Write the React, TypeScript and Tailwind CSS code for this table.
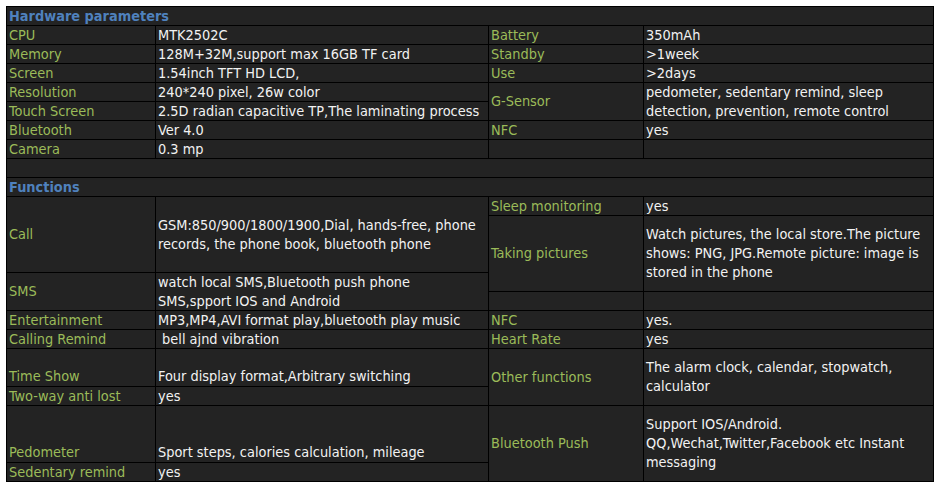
import React from "react";

type CellProps = {
  c: string;
  children?: React.ReactNode;
  kind?: "label" | "value" | "head" | "blank";
  v?: "center" | "end";
};

const Cell = ({ c, children, kind = "value", v = "center" }: CellProps) => {
  const color =
    kind === "label"
      ? "text-[#9bbb59]"
      : kind === "head"
      ? "text-[#4f81bd] font-bold"
      : "text-[#f2f2f2]";
  const align = v === "end" ? "justify-end" : "justify-center";
  return (
    <div className={`${c} bg-[#232323] flex flex-col ${align} pl-[2px] overflow-hidden whitespace-nowrap leading-[19px] ${color}`}>
      {children}
    </div>
  );
};

export default function App() {
  return (
    <div className="w-[942px] h-[487px] bg-white pl-[6px] pt-[6px]" style={{ fontFamily: '"DejaVu Sans Condensed", "DejaVu Sans", sans-serif' }}>
      <div className="grid grid-cols-[148px_332px_154px_289px] grid-rows-[repeat(25,18px)] gap-px p-px bg-black w-[928px] text-[14.4px]">
        <Cell c="col-span-4 row-start-1 col-start-1" kind="head">Hardware parameters</Cell>

        <Cell c="col-start-1 row-start-2" kind="label">CPU</Cell>
        <Cell c="col-start-2 row-start-2">MTK2502C</Cell>
        <Cell c="col-start-1 row-start-3" kind="label">Memory</Cell>
        <Cell c="col-start-2 row-start-3">128M+32M,support max 16GB TF card</Cell>
        <Cell c="col-start-1 row-start-4" kind="label">Screen</Cell>
        <Cell c="col-start-2 row-start-4">1.54inch TFT HD LCD,</Cell>
        <Cell c="col-start-1 row-start-5" kind="label">Resolution</Cell>
        <Cell c="col-start-2 row-start-5">240*240 pixel, 26w color</Cell>
        <Cell c="col-start-1 row-start-6" kind="label">Touch Screen</Cell>
        <Cell c="col-start-2 row-start-6">2.5D radian capacitive TP,The laminating process</Cell>
        <Cell c="col-start-1 row-start-7" kind="label">Bluetooth</Cell>
        <Cell c="col-start-2 row-start-7">Ver 4.0</Cell>
        <Cell c="col-start-1 row-start-8" kind="label">Camera</Cell>
        <Cell c="col-start-2 row-start-8">0.3 mp</Cell>

        <Cell c="col-start-3 row-start-2" kind="label">Battery</Cell>
        <Cell c="col-start-4 row-start-2">350mAh</Cell>
        <Cell c="col-start-3 row-start-3" kind="label">Standby</Cell>
        <Cell c="col-start-4 row-start-3">&gt;1week</Cell>
        <Cell c="col-start-3 row-start-4" kind="label">Use</Cell>
        <Cell c="col-start-4 row-start-4">&gt;2days</Cell>
        <Cell c="col-start-3 row-start-5 row-span-2" kind="label">G-Sensor</Cell>
        <Cell c="col-start-4 row-start-5 row-span-2">
          <span>pedometer, sedentary remind, sleep</span>
          <span>detection, prevention, remote control</span>
        </Cell>
        <Cell c="col-start-3 row-start-7" kind="label">NFC</Cell>
        <Cell c="col-start-4 row-start-7">yes</Cell>
        <Cell c="col-start-3 row-start-8" kind="blank" />
        <Cell c="col-start-4 row-start-8" kind="blank" />

        <Cell c="col-span-4 col-start-1 row-start-9" kind="blank" />
        <Cell c="col-span-4 col-start-1 row-start-10" kind="head">Functions</Cell>

        <Cell c="col-start-1 row-start-11 row-span-4" kind="label">Call</Cell>
        <Cell c="col-start-2 row-start-11 row-span-4">
          <span>GSM:850/900/1800/1900,Dial, hands-free, phone</span>
          <span>records, the phone book, bluetooth phone</span>
        </Cell>
        <Cell c="col-start-1 row-start-15 row-span-2" kind="label">SMS</Cell>
        <Cell c="col-start-2 row-start-15 row-span-2">
          <span>watch local SMS,Bluetooth push phone</span>
          <span>SMS,spport IOS and Android</span>
        </Cell>
        <Cell c="col-start-1 row-start-17" kind="label">Entertainment</Cell>
        <Cell c="col-start-2 row-start-17">MP3,MP4,AVI format play,bluetooth play music</Cell>
        <Cell c="col-start-1 row-start-18" kind="label">Calling Remind</Cell>
        <Cell c="col-start-2 row-start-18">&nbsp;bell ajnd vibration</Cell>
        <Cell c="col-start-1 row-start-19 row-span-2" kind="label" v="end">Time Show</Cell>
        <Cell c="col-start-2 row-start-19 row-span-2" v="end">Four display format,Arbitrary switching</Cell>
        <Cell c="col-start-1 row-start-21" kind="label">Two-way anti lost</Cell>
        <Cell c="col-start-2 row-start-21">yes</Cell>
        <Cell c="col-start-1 row-start-22 row-span-3" kind="label" v="end">Pedometer</Cell>
        <Cell c="col-start-2 row-start-22 row-span-3" v="end">Sport steps, calories calculation, mileage</Cell>
        <Cell c="col-start-1 row-start-25" kind="label">Sedentary remind</Cell>
        <Cell c="col-start-2 row-start-25">yes</Cell>

        <Cell c="col-start-3 row-start-11" kind="label">Sleep monitoring</Cell>
        <Cell c="col-start-4 row-start-11">yes</Cell>
        <Cell c="col-start-3 row-start-12 row-span-4" kind="label">Taking pictures</Cell>
        <Cell c="col-start-4 row-start-12 row-span-4">
          <span>Watch pictures, the local store.The picture</span>
          <span>shows: PNG, JPG.Remote picture: image is</span>
          <span>stored in the phone</span>
        </Cell>
        <Cell c="col-start-3 row-start-16" kind="blank" />
        <Cell c="col-start-4 row-start-16" kind="blank" />
        <Cell c="col-start-3 row-start-17" kind="label">NFC</Cell>
        <Cell c="col-start-4 row-start-17">yes.</Cell>
        <Cell c="col-start-3 row-start-18" kind="label">Heart Rate</Cell>
        <Cell c="col-start-4 row-start-18">yes</Cell>
        <Cell c="col-start-3 row-start-19 row-span-3" kind="label">Other functions</Cell>
        <Cell c="col-start-4 row-start-19 row-span-3">
          <span>The alarm clock, calendar, stopwatch,</span>
          <span>calculator</span>
        </Cell>
        <Cell c="col-start-3 row-start-22 row-span-4" kind="label">Bluetooth Push</Cell>
        <Cell c="col-start-4 row-start-22 row-span-4">
          <span>Support IOS/Android.</span>
          <span>QQ,Wechat,Twitter,Facebook etc Instant</span>
          <span>messaging</span>
        </Cell>
      </div>
    </div>
  );
}
